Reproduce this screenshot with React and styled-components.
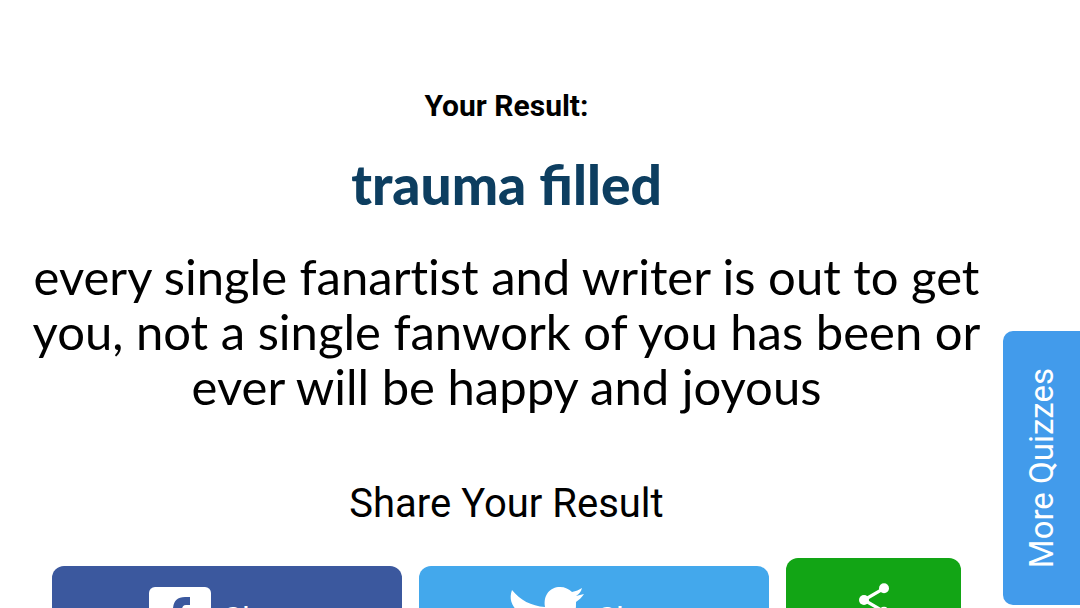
import React from "react";
import styled, { createGlobalStyle } from "styled-components";

const GlobalStyle = createGlobalStyle`
  * { box-sizing: border-box; }
  html { scrollbar-width: none; }
  body {
    margin: 0;
    background: #ffffff;
    color: #000000;
    font-family: Roboto, "Liberation Sans", sans-serif;
  }
`;

const Page = styled.main`
  display: flex;
  flex-direction: column;
  align-items: center;
  padding: 88px 67px 0 0;
  text-align: center;
`;

const Eyebrow = styled.h2`
  margin: 0;
  font-size: 30px;
  line-height: 36px;
  font-weight: 700;
`;

const ResultTitle = styled.h1`
  margin: 26px 0 0;
  color: #0d3e60;
  font-family: Lato, "Open Sans", sans-serif;
  font-size: 55px;
  line-height: 68px;
  font-weight: 900;
`;

const Description = styled.p`
  margin: 31px 0 0;
  padding: 0 24px;
  font-family: Lato, "Open Sans", sans-serif;
  font-size: 49px;
  line-height: 55px;
  font-variant-ligatures: none;
`;

const ShareHeading = styled.h3`
  margin: 66px 0 0;
  font-size: 40px;
  line-height: 48px;
  font-weight: 400;
`;

const ShareRow = styled.div`
  display: flex;
  align-items: center;
  align-self: stretch;
  gap: 17px;
  margin-top: 30px;
  padding: 0 52px;
`;

const ShareButton = styled.button`
  display: flex;
  flex: ${({ $grow }) => $grow} 1 0;
  align-items: ${({ $top }) => ($top ? "flex-start" : "center")};
  justify-content: center;
  gap: 12px;
  height: ${({ $top }) => ($top ? "120px" : "104px")};
  padding: ${({ $top }) => ($top ? "22px 0 0" : "0")};
  border: 0;
  border-radius: 12px;
  background: ${({ $color }) => $color};
  color: #ffffff;
  font-family: inherit;
  font-size: 32px;
  line-height: 38px;
  cursor: pointer;
`;

const MoreTab = styled.button`
  position: fixed;
  top: 331px;
  right: 0;
  display: flex;
  align-items: center;
  justify-content: center;
  width: 77px;
  padding: 37px 0;
  border: 0;
  border-radius: 10px 0 0 10px;
  background: #429beb;
  color: #ffffff;
  font-family: inherit;
  font-size: 33px;
  line-height: 40px;
  cursor: pointer;
`;

const VerticalLabel = styled.span`
  writing-mode: vertical-rl;
  transform: rotate(180deg);
  white-space: nowrap;
`;

const FacebookIcon = () => (
  <svg width="62" height="62" viewBox="0 0 62 62" aria-hidden="true">
    <rect width="62" height="62" rx="6" fill="#fff" />
    <path
      fill="#3b589e"
      d="M41 10v8h-4q-4 0-4 5v7h8l-1 9h-7v23h-9V39h-6v-9h6v-9Q25 10 36 10Z"
    />
  </svg>
);

const TwitterIcon = () => (
  <svg width="76" height="62" viewBox="0 0 76 62" aria-hidden="true">
    <path
      fill="#fff"
      d="M3 3C11 13 22 19 36 20C34 8 41 0 51 0C56 0 60 2 63 5C67 4 70 3 73 1C72 5 70 7 67 9L75 7C73 10 70 13 67 15C68 41 48 62 24 62C15 62 7 59 0 55C9 56 17 53 23 49C16 49 11 44 9 38C11 39 14 39 16 38C8 36 3 30 3 22C5 24 8 24 10 25C2 19 0 11 3 3Z"
    />
  </svg>
);

const ShareIcon = () => (
  <svg width="40" height="40" viewBox="0 0 24 24" aria-hidden="true">
    <path d="M18 5 6 12l12 7" fill="none" stroke="#fff" strokeWidth="2" />
    <g fill="#fff">
      <circle cx="18" cy="5" r="3" />
      <circle cx="6" cy="12" r="3" />
      <circle cx="18" cy="19" r="3" />
    </g>
  </svg>
);

export default function App() {
  return (
    <>
      <GlobalStyle />
      <Page>
        <Eyebrow>Your Result:</Eyebrow>
        <ResultTitle>trauma filled</ResultTitle>
        <Description>
          every single fanartist and writer is out to get you, not a single
          fanwork of you has been or ever will be happy and joyous
        </Description>
        <ShareHeading>Share Your Result</ShareHeading>
        <ShareRow>
          <ShareButton type="button" $grow={2} $color="#3b589e">
            <FacebookIcon />
            Share
          </ShareButton>
          <ShareButton type="button" $grow={2} $color="#43a8ec">
            <TwitterIcon />
            Share
          </ShareButton>
          <ShareButton
            type="button"
            $grow={1}
            $color="#12a515"
            $top
            aria-label="More sharing options"
          >
            <ShareIcon />
          </ShareButton>
        </ShareRow>
      </Page>
      <MoreTab type="button">
        <VerticalLabel>More Quizzes</VerticalLabel>
      </MoreTab>
    </>
  );
}
